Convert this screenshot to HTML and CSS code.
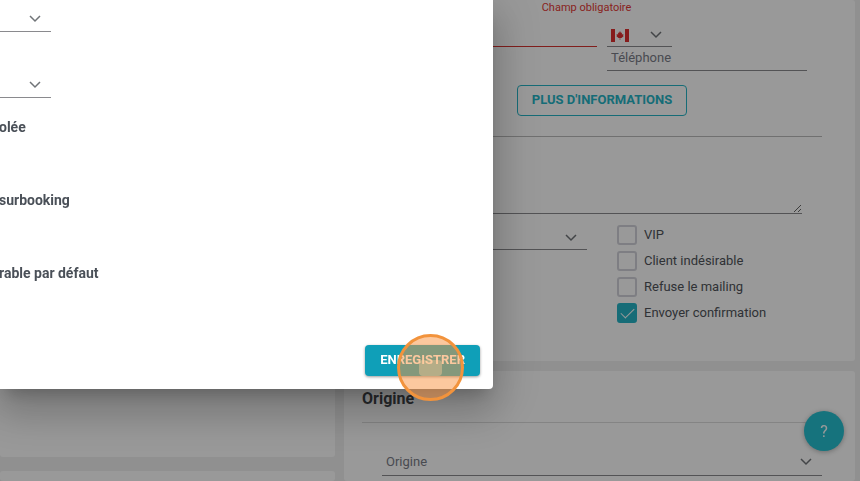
FILE: index.html
```html
<!DOCTYPE html>
<html lang="fr">
<head>
    <meta charset="UTF-8">
    <meta name="viewport" content="width=device-width, initial-scale=1.0">
    <title>Client</title>
    <link rel="stylesheet" href="styles.css">
</head>
<body>
    <main class="page">
        <div class="column column-left">
            <section class="card card-main"></section>
            <section class="card card-rest"></section>
        </div>

        <div class="column">
            <section class="card card-client">
                <p class="error">Champ obligatoire</p>
                <div class="contact">
                    <input class="field field-invalid" type="text" aria-label="Nom">
                    <div class="phone">
                        <div class="select select-country">
                            <select class="field" aria-label="Pays"><option></option></select>
                            <svg class="flag" viewBox="0 0 18 13" width="18" height="13">
                                <path d="M0 0h4v13H0zM14 0h4v13h-4z" fill="#e0302f"/>
                                <path d="M9 2l1 2 1-.5-.2 2L12.500 5l-.5 1.500.8.5-2.300 2H9.300v2h-.6V9H7.500L5.200 7l.8-.5L5.500 5l1.700.5-.2-2L8 4z" fill="#e0302f"/>
                            </svg>
                            <svg class="chevron" viewBox="0 0 12 8" width="12" height="8"><path d="M1 1l5 5 5-5"/></svg>
                        </div>
                        <input class="field field-phone" type="tel" placeholder="Téléphone" aria-label="Téléphone">
                    </div>
                </div>
                <button class="btn-outline" type="button">PLUS D'INFORMATIONS</button>
                <hr class="divider divider-strong">
                <textarea class="notes" aria-label="Notes"></textarea>
                <div class="options">
                    <div class="select select-type">
                        <select class="field" aria-label="Type"><option></option></select>
                        <svg class="chevron" viewBox="0 0 12 8" width="12" height="8"><path d="M1 1l5 5 5-5"/></svg>
                    </div>
                    <div class="checks">
                        <label class="check"><input type="checkbox">VIP</label>
                        <label class="check"><input type="checkbox">Client indésirable</label>
                        <label class="check"><input type="checkbox">Refuse le mailing</label>
                        <label class="check"><input type="checkbox" checked>Envoyer confirmation</label>
                    </div>
                </div>
            </section>

            <section class="card card-origin">
                <h2>Origine</h2>
                <hr class="divider">
                <div class="select select-origin">
                    <select class="field" aria-label="Origine"><option>Origine</option></select>
                    <svg class="chevron" viewBox="0 0 12 8" width="12" height="8"><path d="M1 1l5 5 5-5"/></svg>
                </div>
            </section>
        </div>
    </main>

    <button class="help" type="button" aria-label="Aide">?</button>

    <div class="backdrop"></div>

    <div class="dialog" role="dialog">
        <div class="dialog-body">
            <div class="select select-dialog">
                <select class="field" aria-label="Option 1"><option></option></select>
                <svg class="chevron" viewBox="0 0 12 8" width="12" height="8"><path d="M1 1l5 5 5-5"/></svg>
            </div>
            <div class="select select-dialog">
                <select class="field" aria-label="Option 2"><option></option></select>
                <svg class="chevron" viewBox="0 0 12 8" width="12" height="8"><path d="M1 1l5 5 5-5"/></svg>
            </div>
            <h3>olée</h3>
            <h3>surbooking</h3>
            <h3>rable par défaut</h3>
        </div>
        <div class="dialog-actions">
            <div class="save">
                <button class="btn-primary" type="button">ENREGISTRER</button>
                <span class="click-marker"></span>
            </div>
        </div>
    </div>
</body>
</html>
```

FILE: styles.css
```css
* {
    box-sizing: border-box;
}
body {
    margin: 0;
    height: 100vh;
    overflow: hidden;
    background: #f1f1f1;
    color: #50555c;
    font-family: Roboto, "Liberation Sans", sans-serif;
    font-size: 13px;
}
input, select, textarea, button {
    font: inherit;
    color: inherit;
}

/* Page behind the dialog */
.page {
    display: grid;
    grid-template-columns: 335px 1fr;
    gap: 9px;
    height: 100vh;
    padding-right: 5px;
}
.column {
    display: flex;
    flex-direction: column;
    gap: 10px;
    min-width: 0;
}
.column-left {
    gap: 14px;
}
.card {
    background: #fff;
    border-radius: 3px;
}
.card-main {
    flex: 0 0 457px;
}
.card-rest, .card-origin {
    flex: 1 0 auto;
}
.card-client {
    padding: 0 33px 38px 38px;
}
.card-origin {
    padding: 18px 33px 0 18px;
}
.card-origin h2 {
    margin: 0 0 13px;
    font-size: 16px;
    line-height: 20px;
    color: #44474b;
}

.field {
    width: 100%;
    height: 24px;
    padding: 0 4px;
    border: 0;
    border-bottom: 1px solid #8a8a8e;
    border-radius: 0;
    background: none;
    appearance: none;
    outline: none;
}
.field::placeholder {
    color: #7a7d88;
}
.field-phone {
    padding-bottom: 2px;
}
.field-invalid {
    border-color: #d8322f;
}
.error {
    margin: 0 0 8px;
    padding-right: 31px;
    font-size: 11px;
    line-height: 15px;
    text-align: center;
    color: #e53935;
}

.select {
    display: grid;
    align-items: center;
}
.select > * {
    grid-area: 1 / 1;
}
.chevron {
    justify-self: end;
    margin-right: 10px;
    fill: none;
    stroke: #707478;
    stroke-width: 1.5;
    pointer-events: none;
}
.flag {
    margin-left: 4px;
    pointer-events: none;
}

.contact {
    display: grid;
    grid-template-columns: 1fr 200px;
    gap: 10px;
    margin-right: 15px;
}
.select-country {
    width: 65px;
}
.phone {
    display: flex;
    flex-direction: column;
}

.btn-outline {
    display: block;
    height: 31px;
    margin: 14px auto 20px;
    padding: 0 14px 2px;
    border: 1px solid #26b5c6;
    border-radius: 4px;
    background: none;
    color: #26b5c6;
    font-weight: 700;
}
.divider {
    margin: 0;
    border: 0;
    border-top: 1px solid #ddd;
}
.divider-strong {
    margin-left: -20px;
    border-color: #bbb;
}
.notes {
    display: block;
    width: calc(100% - 20px);
    height: 71px;
    margin: 6px 0 11px;
    border: 0;
    border-bottom: 1px solid #8a8a8e;
    background: none;
    resize: vertical;
}
.options {
    display: grid;
    grid-template-columns: 1fr 205px;
    gap: 30px;
    align-items: start;
}
.select-type .field {
    height: 25px;
}
.checks {
    display: flex;
    flex-direction: column;
    gap: 6px;
}
.check {
    display: flex;
    align-items: center;
    gap: 7px;
    line-height: 20px;
    color: #50545a;
}
.check input {
    display: grid;
    place-items: center;
    width: 20px;
    height: 20px;
    margin: 0;
    border: 2px solid #d2d3da;
    border-radius: 3px;
    appearance: none;
}
.check input:checked {
    border-color: #26b5c6;
    background: #26b5c6;
}
.check input:checked::after {
    content: "";
    width: 12px;
    height: 6px;
    margin-bottom: 4px;
    border: solid #fff;
    border-width: 0 0 1px 1px;
    transform: rotate(-45deg);
}
.select-origin {
    margin: 25px 0 0 20px;
}
.select-origin .field {
    height: 28px;
    color: #7a7d88;
}

.help {
    position: fixed;
    right: 16px;
    bottom: 30px;
    width: 40px;
    height: 40px;
    padding: 0;
    border: 0;
    border-radius: 50%;
    background: #26c0d0;
    color: #fff;
    font-size: 16px;
    box-shadow: 0 1px 5px rgba(0,0,0,0.3);
}

.backdrop {
    position: fixed;
    inset: 0;
    background: rgba(0,0,0,0.4);
}

/* Dialog */
.dialog {
    position: absolute;
    top: 0;
    left: 0;
    right: 367px;
    background: #fff;
    border-radius: 0 0 4px 0;
    box-shadow: 0 11px 15px -7px rgba(0,0,0,0.2), 0 24px 38px 3px rgba(0,0,0,0.14), 0 9px 46px 8px rgba(0,0,0,0.12);
}
.select-dialog {
    width: 51px;
    padding-top: 6px;
}
.select-dialog .field {
    height: 26px;
}
.select-dialog + .select-dialog {
    margin-top: 34px;
}
.dialog h3 {
    margin: 0 0 53px -1px;
    font-size: 14px;
    line-height: 20px;
    color: #4a5058;
}
.dialog .select-dialog + h3 {
    margin-top: 19px;
}
.dialog-actions {
    display: flex;
    justify-content: flex-end;
    padding: 9px 13px 13px;
}
.save {
    position: relative;
}
.btn-primary {
    display: block;
    height: 31px;
    padding: 0 15px 2px;
    border: 0;
    border-radius: 4px;
    background: #0f9fb8;
    color: #fff;
    font-weight: 700;
    box-shadow: 0 1px 3px rgba(0,0,0,0.4);
}
.click-marker {
    position: absolute;
    top: -11px;
    left: 32px;
    display: grid;
    place-items: center;
    width: 67px;
    height: 67px;
    border: 3px solid #f2933c;
    border-radius: 50%;
    background: rgba(249,146,62,0.5);
    pointer-events: none;
}
.click-marker::after {
    content: "";
    width: 23px;
    height: 16px;
    border-radius: 4px;
    background: rgba(255,205,155,0.4);
}
```
